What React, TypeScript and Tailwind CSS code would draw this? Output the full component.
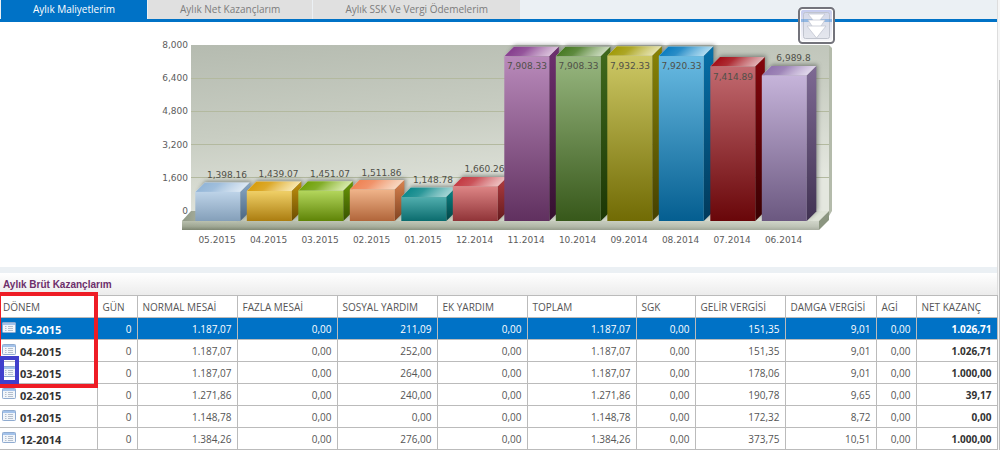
import * as React from "react";

const TABS = ["Aylık Maliyetlerim", "Aylık Net Kazançlarım", "Aylık SSK Ve Vergi Ödemelerim"];

type Bar = {
  period: string;
  value: number;
  label: string;
  // front top, front bottom, side top, side bottom, top face
  colors: [string, string, string, string, string];
  inside?: boolean;
};

const BARS: Bar[] = [
  { period: "05.2015", value: 1398.16, label: "1,398.16", colors: ["#bdd3e8", "#849fb9", "#8aa9c6", "#4a6580", "#8fb3d6"] },
  { period: "04.2015", value: 1439.07, label: "1,439.07", colors: ["#f0d067", "#ab7d10", "#c1920f", "#6b4c02", "#d69a05"] },
  { period: "03.2015", value: 1451.07, label: "1,451.07", colors: ["#b3d65c", "#5f8407", "#6a9807", "#375200", "#6c9f02"] },
  { period: "02.2015", value: 1511.86, label: "1,511.86", colors: ["#f0b48a", "#b1653a", "#d98350", "#814321", "#ee8050"] },
  { period: "01.2015", value: 1148.78, label: "1,148.78", colors: ["#51aeae", "#0b6c6e", "#0b8587", "#024546", "#068587"] },
  { period: "12.2014", value: 1660.26, label: "1,660.26", colors: ["#dd8585", "#903438", "#b13c40", "#641b1e", "#c1343c"] },
  { period: "11.2014", value: 7908.33, label: "7,908.33", colors: ["#b98abb", "#60305f", "#6e3070", "#35102f", "#82388a"], inside: true },
  { period: "10.2014", value: 7908.33, label: "7,908.33", colors: ["#98b780", "#37581a", "#406b1d", "#1c3605", "#42761d"], inside: true },
  { period: "09.2014", value: 7932.33, label: "7,932.33", colors: ["#cdc865", "#716b04", "#898406", "#454000", "#9e9700"], inside: true },
  { period: "08.2014", value: 7920.33, label: "7,920.33", colors: ["#69bbe3", "#045e90", "#0670a9", "#013a5b", "#0479bd"], inside: true },
  { period: "07.2014", value: 7414.89, label: "7,414.89", colors: ["#c36a70", "#690609", "#84060c", "#3a0002", "#a00710"], inside: true },
  { period: "06.2014", value: 6989.8, label: "6,989.8", colors: ["#c6b4da", "#6b5880", "#7e6a94", "#413253", "#8d70ab"] },
];

const TICKS = ["8,000", "6,400", "4,800", "3,200", "1,600", "0"];

const COLUMNS = [
  { title: "DÖNEM", width: "w-[97px]" },
  { title: "GÜN", width: "w-[40px]" },
  { title: "NORMAL MESAİ", width: "w-[100px]" },
  { title: "FAZLA MESAİ", width: "w-[100px]" },
  { title: "SOSYAL YARDIM", width: "w-[100px]" },
  { title: "EK YARDIM", width: "w-[90px]" },
  { title: "TOPLAM", width: "w-[109px]" },
  { title: "SGK", width: "w-[59px]" },
  { title: "GELİR VERGİSİ", width: "w-[90px]" },
  { title: "DAMGA VERGİSİ", width: "w-[91px]" },
  { title: "AGİ", width: "w-[40px]" },
  { title: "NET KAZANÇ", width: "w-[81px]" },
];

const ROWS = [
  ["05-2015", "0", "1.187,07", "0,00", "211,09", "0,00", "1.187,07", "0,00", "151,35", "9,01", "0,00", "1.026,71"],
  ["04-2015", "0", "1.187,07", "0,00", "252,00", "0,00", "1.187,07", "0,00", "151,35", "9,01", "0,00", "1.026,71"],
  ["03-2015", "0", "1.187,07", "0,00", "264,00", "0,00", "1.187,07", "0,00", "178,06", "9,01", "0,00", "1.000,00"],
  ["02-2015", "0", "1.271,86", "0,00", "240,00", "0,00", "1.271,86", "0,00", "190,78", "9,65", "0,00", "39,17"],
  ["01-2015", "0", "1.148,78", "0,00", "0,00", "0,00", "1.148,78", "0,00", "172,32", "8,72", "0,00", "0,00"],
  ["12-2014", "0", "1.384,26", "0,00", "276,00", "0,00", "1.384,26", "0,00", "373,75", "10,51", "0,00", "1.000,00"],
];

function CostChart() {
  const floor = 199;
  return (
    <svg viewBox="0 0 701 245" className="mx-auto block h-[245px] w-[701px]" role="img" aria-label="Aylık Maliyetlerim">
      <defs>
        <linearGradient id="wall" x1="0" y1="0" x2="0.35" y2="1">
          <stop offset="0" stopColor="#b5bbb0" />
          <stop offset="0.5" stopColor="#c8cdc2" />
          <stop offset="1" stopColor="#e4e7df" />
        </linearGradient>
        <linearGradient id="slab" x1="0" y1="0" x2="0" y2="1">
          <stop offset="0" stopColor="#b9c0ae" />
          <stop offset="0.6" stopColor="#9ea692" />
          <stop offset="1" stopColor="#7c8470" />
        </linearGradient>
        <linearGradient id="slabFade" x1="0" y1="0" x2="1" y2="0">
          <stop offset="0" stopColor="#fff" stopOpacity="0" />
          <stop offset="1" stopColor="#fff" stopOpacity="0.35" />
        </linearGradient>
        <linearGradient id="floorTop" x1="0" y1="0" x2="1" y2="0">
          <stop offset="0" stopColor="#8f9885" />
          <stop offset="0.06" stopColor="#c3c9b9" />
          <stop offset="1" stopColor="#dfe3d8" />
        </linearGradient>
        <filter id="glow" x="-30%" y="-30%" width="160%" height="160%">
          <feGaussianBlur stdDeviation="2" />
        </filter>
        {BARS.map(({ period, colors }, i) => (
          <React.Fragment key={period}>
            <linearGradient id={`front${i}`} x1="0" y1="0" x2="0" y2="1">
              <stop offset="0" stopColor={colors[0]} />
              <stop offset="1" stopColor={colors[1]} />
            </linearGradient>
            <linearGradient id={`side${i}`} x1="0" y1="0" x2="0" y2="1">
              <stop offset="0" stopColor={colors[2]} />
              <stop offset="1" stopColor={colors[3]} />
            </linearGradient>
            <linearGradient id={`top${i}`} x1="0" y1="0" x2="1" y2="0.2">
              <stop offset="0.1" stopColor={colors[4]} />
              <stop offset="0.45" stopColor={colors[4]} stopOpacity="0.85" />
              <stop offset="1" stopColor={colors[0]} stopOpacity="0.5" />
            </linearGradient>
          </React.Fragment>
        ))}
      </defs>

      {/* Back wall and base */}
      <rect x="43" y="23" width="638" height="167" fill="url(#wall)" />
      <path d="M681 23l3 3v163l-3 5z" fill="#b4bbab" />
      {TICKS.slice(1, 5).map((tick, i) => (
        <path key={tick} d={`M43 ${56.5 + i * 33}H681`} stroke="#b3b99f" />
      ))}
      <path d="M34 199l9-10h638l-10 10z" fill="url(#floorTop)" />
      <rect x="34" y="199" width="637" height="9" fill="url(#slab)" />
      <rect x="34" y="199" width="637" height="9" fill="url(#slabFade)" />
      <path d="M671 199l10-10v9l-10 10z" fill="#8b9580" />

      {TICKS.map((tick, i) => (
        <text key={tick} x="40" y={26 + Math.round(i * 33.2)} textAnchor="end" className="fill-[#5c5c5c] font-['DejaVu_Sans',sans-serif] text-[9px]">
          {tick}
        </text>
      ))}

      {BARS.map((bar, i) => {
        const x = 47.3 + i * 51.5;
        const h = (bar.value * 166.6) / 8000;
        const y = floor - h;
        return (
          <g key={bar.period}>
            <path d={`M${x + 3} ${y}l7 -11h46v${h}l-10 9z`} fill="#4e5450" opacity="0.6" filter="url(#glow)" />
            <path d={`M${x} ${y}l9.500 -9.500h45l-9.500 9.500z`} fill="#fff" />
            <path d={`M${x} ${y}l9.500 -9.500h45l-9.500 9.500z`} fill={`url(#top${i})`} />
            <path d={`M${x + 45} ${y}l9.500 -9.500v${h}l-9.500 9.500z`} fill={`url(#side${i})`} />
            <rect x={x} y={y} width="45" height={h} fill={`url(#front${i})`} />
          </g>
        );
      })}

      {BARS.map((bar, i) => {
        const x = 47 + i * 51.5;
        const y = floor - (bar.value * 166.6) / 8000;
        return (
          <g key={bar.period} textAnchor="middle" className="fill-[#5c5c5c] font-['DejaVu_Sans',sans-serif] text-[9px]">
            <text x={x + (bar.inside ? 23 : 32)} y={bar.inside ? y + 13 : y - 14} className="fill-[#505048]">
              {bar.label}
            </text>
            <text x={x + 22} y="221">
              {bar.period}
            </text>
          </g>
        );
      })}
    </svg>
  );
}

function SheetIcon() {
  return (
    <svg viewBox="0 0 14 11" className="mt-0.5 h-[11px] w-3.5 shrink-0" aria-hidden="true">
      <rect x="0.5" y="0.5" width="13" height="10" rx="0.8" fill="#f1f5fa" stroke="#8fabd0" />
      <path d="M1 1h12v2H1z" fill="#a3c2ea" />
      <path d="M3 4.500h1.500M6 4.500h5M3 6.500h1.500M6 6.500h5M3 8.500h1.500M6 8.500h5" stroke="#b4bfcd" />
    </svg>
  );
}

function ScrollDownButton() {
  return (
    <button type="button" aria-label="Aşağı" className="absolute top-[7px] right-[162px] h-[37px] w-[37px]">
      <svg viewBox="0 0 37 37" className="h-full w-full">
        <defs>
          <linearGradient id="btn" x1="0" y1="0" x2="0" y2="1">
            <stop offset="0" stopColor="#c5cbee" />
            <stop offset="0.45" stopColor="#e2e4f2" />
            <stop offset="1" stopColor="#f6f6f9" />
          </linearGradient>
        </defs>
        <rect x="1" y="1" width="35" height="35" rx="3.500" fill="#fff" stroke="#73737b" strokeWidth="2" />
        <rect x="3" y="3" width="31" height="31" rx="2" fill="url(#btn)" />
        <rect x="5.500" y="5.500" width="26" height="26" rx="2" fill="#dadde6" fillOpacity="0.6" stroke="#c0c4ce" />
        <path d="M3 12h31v3H3z" fill="#4a8fd8" opacity="0.5" />
        <path d="M10 7h17l-5 6h5l-4 6h5L18.500 31 9 19h5l-4-6h5z" fill="#fff" stroke="#c3c7d2" strokeWidth="0.8" />
        <path d="M15 13h7M14 19h9" stroke="#c3c7d2" strokeWidth="0.8" />
      </svg>
    </button>
  );
}

export default function App() {
  const [tab, setTab] = React.useState(0);

  return (
    <div className="flex w-full overflow-hidden bg-white font-['Open_Sans','Noto_Sans',sans-serif] text-[10px] text-[#555]">
      <main className="relative min-w-0 flex-1">
        <nav className="flex h-[22px] gap-px border-b-[3px] border-[#0072c6] bg-[#ebf0f4] pl-px">
          {TABS.map((name, i) => (
            <button
              key={name}
              type="button"
              onClick={() => setTab(i)}
              className={
                i === tab
                  ? "bg-[#0072c6] px-8 font-medium text-white"
                  : "bg-[#e0e0e0] px-8 font-medium text-[#7c7c7c]"
              }
            >
              {name}
            </button>
          ))}
        </nav>

        <CostChart />
        <ScrollDownButton />

        <div className="h-1.5 bg-[#ebf0f4]" />

        <section className="relative">
          <h2 className="flex h-[22px] items-center bg-linear-to-b from-white to-[#ececec] pl-[3px] font-['Liberation_Sans',sans-serif] text-[10px] font-bold text-[#6d2f6b]">
            Aylık Brüt Kazançlarım
          </h2>
          <table className="w-full table-fixed border-collapse border-y border-[#bbb]">
            <colgroup>
              {COLUMNS.map((c) => (
                <col key={c.title} className={c.width} />
              ))}
            </colgroup>
            <thead>
              <tr className="h-[22px]">
                {COLUMNS.map((c, i) => (
                  <th
                    key={c.title}
                    className={`border-r border-[#bbb] p-0 text-left leading-4 font-normal whitespace-nowrap ${i === 0 ? "pl-[3px]" : "pl-[5px]"}`}
                  >
                    {c.title}
                  </th>
                ))}
              </tr>
            </thead>
            <tbody>
              {ROWS.map((row, r) => (
                <tr key={row[0]} className={r === 0 ? "h-[22px] bg-[#0072c6] font-medium text-white" : "h-[22px]"}>
                  {row.map((cell, c) =>
                    c === 0 ? (
                      <td key={c} className="border-t border-r border-[#bbb] p-0 pl-0.5 leading-4">
                        <div className={`flex items-start gap-1 text-[11px] font-bold ${r === 0 ? "text-white" : "text-[#333]"}`}>
                          <SheetIcon />
                          <span className="pt-0.5">{cell}</span>
                        </div>
                      </td>
                    ) : (
                      <td
                        key={c}
                        className={`border-t border-r border-[#bbb] p-0 pr-[5px] text-right leading-4 ${c === 11 ? "font-bold" : ""} ${c === 11 && r > 0 ? "text-[#333]" : ""}`}
                      >
                        {cell}
                      </td>
                    ),
                  )}
                </tr>
              ))}
            </tbody>
          </table>

          {/* Highlight frames */}
          <div className="pointer-events-none absolute top-[19px] left-0 h-24 w-[98px] border-4 border-l border-[#ee1c25]" />
          <div className="pointer-events-none absolute top-[83px] left-0 h-7 w-[19px] border-4 border-[#3f3fcc]" />
        </section>
      </main>

      <aside className="flex w-[3px] flex-col border-l border-[#ddd] bg-[#f6f6f6]">
        <div className="h-20" />
        <div className="flex-1 border-r border-[#bbb]" />
      </aside>
    </div>
  );
}
